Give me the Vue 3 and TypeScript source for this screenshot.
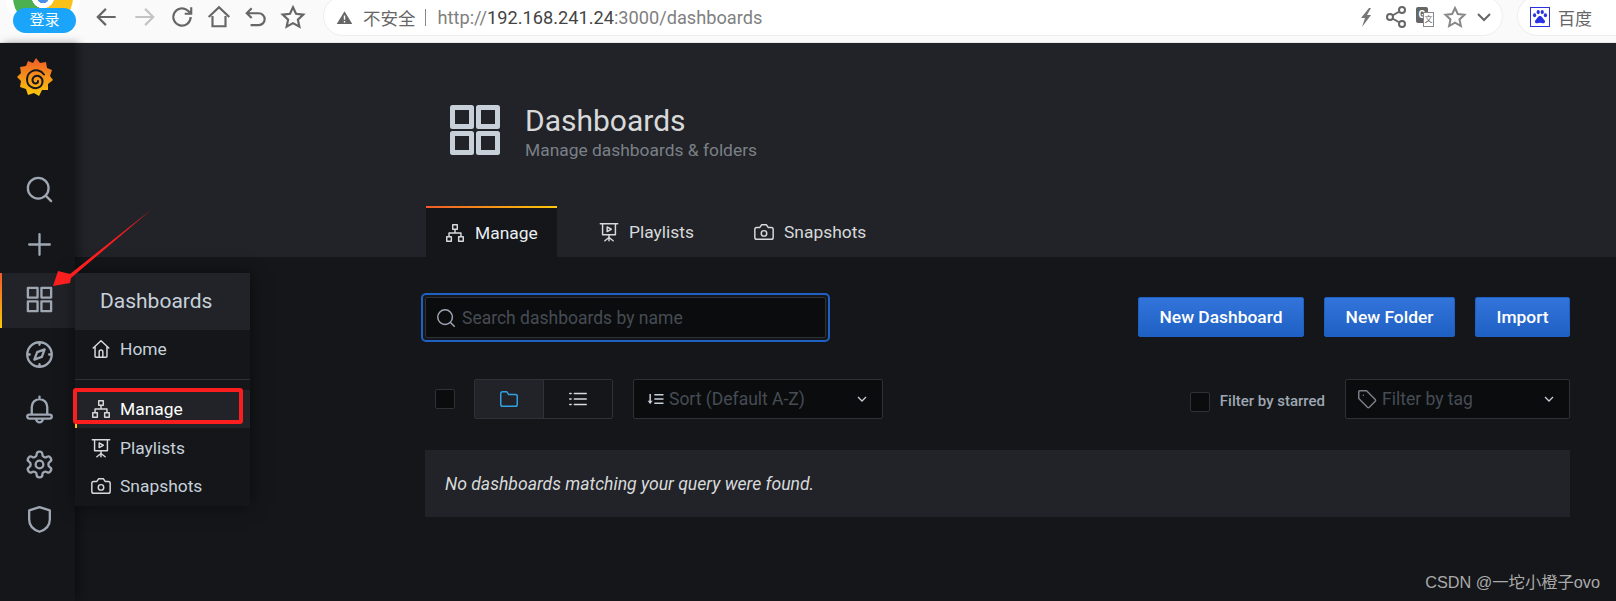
<script setup lang="ts">
const icons: Record<string, string> = {
  search: 'M19 11a8 8 0 1 1-16 0 8 8 0 0 1 16 0ZM21 21l-4.400-4.400',
  plus: 'M12 4v16M4 12h16',
  apps: 'M3 3h7.500v7.500H3zM13.500 3H21v7.500h-7.500zM3 13.500h7.500V21H3zM13.500 13.500H21V21h-7.500z',
  compass: 'M21.500 12a9.500 9.500 0 1 1-19 0 9.500 9.500 0 0 1 19 0ZM16 8l-2.200 5.800L8 16l2.200-5.800ZM12 2.500v2M12 19.500v2M2.500 12h2M19.500 12h2',
  bell: 'M6 15.500V10a6 6 0 0 1 12 0v5.500M12 4V2M4 16h16a1 1 0 0 1 0 3H4a1 1 0 0 1 0-3ZM9.500 19.500a2.500 2.500 0 0 0 5 0',
  gear: 'M12.220 2h-.44a2 2 0 0 0-2 2v.18a2 2 0 0 1-1 1.730l-.43.25a2 2 0 0 1-2 0l-.15-.08a2 2 0 0 0-2.730.73l-.22.38a2 2 0 0 0 .73 2.730l.15.1a2 2 0 0 1 1 1.720v.51a2 2 0 0 1-1 1.740l-.15.09a2 2 0 0 0-.73 2.730l.22.38a2 2 0 0 0 2.730.73l.15-.08a2 2 0 0 1 2 0l.43.25a2 2 0 0 1 1 1.730V20a2 2 0 0 0 2 2h.44a2 2 0 0 0 2-2v-.18a2 2 0 0 1 1-1.730l.43-.25a2 2 0 0 1 2 0l.15.08a2 2 0 0 0 2.730-.73l.22-.39a2 2 0 0 0-.73-2.730l-.15-.08a2 2 0 0 1-1-1.740v-.5a2 2 0 0 1 1-1.740l.15-.09a2 2 0 0 0 .73-2.730l-.22-.38a2 2 0 0 0-2.730-.73l-.15.08a2 2 0 0 1-2 0l-.43-.25a2 2 0 0 1-1-1.730V4a2 2 0 0 0-2-2ZM15 12a3 3 0 1 1-6 0 3 3 0 0 1 6 0Z',
  shield: 'M12 2.500 20 5v7c0 5-3.500 8-8 9.500-4.500-1.500-8-4.500-8-9.500V5Z',
  home: 'M3.500 11 12 3l8.500 8M5.500 9.500V20a1 1 0 0 0 1 1h11a1 1 0 0 0 1-1V9.500M10 21v-6a2 2 0 0 1 4 0v6',
  sitemap: 'M9.500 3h5v5h-5zM3 16h5v5H3zM16 16h5v5h-5zM12 8v4M5.500 16v-4h13v4',
  present: 'M2.500 3h19M5 3v12h14V3M12 15v3M7.500 21.500 12 18l4.500 3.500M12 18v3.500M10 6.500l4.500 2.500-4.500 2.500Z',
  camera: 'M4 7h3.500l2-3h5l2 3H20a2 2 0 0 1 2 2v9a2 2 0 0 1-2 2H4a2 2 0 0 1-2-2V9a2 2 0 0 1 2-2ZM15 13.500a3 3 0 1 1-6 0 3 3 0 0 1 6 0Z',
  folder: 'M3 6a2 2 0 0 1 2-2h4.500l2 3H19a2 2 0 0 1 2 2v9a2 2 0 0 1-2 2H5a2 2 0 0 1-2-2Z',
  list: 'M8 6h13M8 12h13M8 18h13M3 6h1.500M3 12h1.500M3 18h1.500',
  chevron: 'M6 9l6 6 6-6',
  tag: 'M3 4a1 1 0 0 1 1-1h7.500L21 12.500a1.500 1.500 0 0 1 0 2L14.500 21a1.500 1.500 0 0 1-2 0L3 11.500ZM8 8h.01',
  sort: 'M10 7h11M10 12h11M10 17h11M5 6v11',
  back: 'M20 12H4M11 4.500 3.500 12l7.500 7.500',
  forward: 'M4 12h16M13 4.500l7.500 7.500-7.500 7.500',
  reload: 'M20 12a8 8 0 1 1-2.500-5.800L20 8.500M20.500 3v6h-6',
  browserHome: 'M2.500 12 12 3l9.500 9M6 11v9.500h12V11',
  undo: 'M8 4 3.500 8.500 8 13M4 8.500h10.500a5.500 5.500 0 0 1 0 11H7',
  star: 'M12 3l2.800 6 6.700.8-5 4.600 1.400 6.600-5.900-3.300L6.100 21l1.400-6.600-5-4.600 6.700-.8Z',
  share: 'M8.500 10.500l7-4M8.500 13.500l7 4M9 12a3 3 0 1 1-6 0 3 3 0 0 1 6 0ZM21 5a3 3 0 1 1-6 0 3 3 0 0 1 6 0ZM21 19a3 3 0 1 1-6 0 3 3 0 0 1 6 0Z',
}

const navItems = ['search', 'plus', 'apps', 'compass', 'bell', 'gear', 'shield']
const tabs = [
  { icon: 'sitemap', label: 'Manage', active: true },
  { icon: 'present', label: 'Playlists', active: false },
  { icon: 'camera', label: 'Snapshots', active: false },
]
const menuLower = [
  { icon: 'sitemap', label: 'Manage', active: true },
  { icon: 'present', label: 'Playlists', active: false },
  { icon: 'camera', label: 'Snapshots', active: false },
]
const leftTools = [
  { icon: 'back', cls: '' },
  { icon: 'forward', cls: 'faint' },
  { icon: 'reload', cls: '' },
  { icon: 'browserHome', cls: '' },
  { icon: 'undo', cls: '' },
  { icon: 'star', cls: '' },
]
</script>

<template>
  <div class="root">
    <header class="browser">
      <div class="login-wrap">
        <div class="chrome-logo"></div>
        <span class="login">登录</span>
      </div>
      <div class="tools">
        <svg v-for="t in leftTools" :key="t.icon" class="tool" :class="t.cls" viewBox="0 0 24 24"><path :d="icons[t.icon]" /></svg>
      </div>
      <div class="address">
        <svg class="warn" viewBox="0 0 24 24"><path d="M12 3 23 21H1Z" fill="#666" /><path d="M12 9v6M12 17v2" stroke="#fff" stroke-width="2" /></svg>
        <span class="insecure">不安全</span>
        <span class="sep"></span>
        <span class="url">http://<span class="host">192.168.241.24</span>:3000/dashboards</span>
        <span class="addr-tools">
          <svg class="at" viewBox="0 0 24 24"><path d="M15 3 7 13h4l-3 9 9-12h-4l4-7Z" fill="#777" /></svg>
          <svg class="at stroke" viewBox="0 0 24 24"><path :d="icons.share" /></svg>
          <span class="translate"><span class="tg">G</span><span class="tx">文</span></span>
          <svg class="at stroke light" viewBox="0 0 24 24"><path :d="icons.star" /></svg>
          <svg class="at stroke" viewBox="0 0 24 24"><path :d="icons.chevron" /></svg>
        </span>
      </div>
      <div class="baidu">
        <span class="paw">
          <svg viewBox="0 0 20 20"><g fill="#2932e1"><ellipse cx="4" cy="8" rx="1.800" ry="2.300" /><ellipse cx="8" cy="4.500" rx="1.800" ry="2.400" /><ellipse cx="12.500" cy="4.500" rx="1.800" ry="2.400" /><ellipse cx="16" cy="8" rx="1.800" ry="2.300" /><path d="M10 9c-2.500 0-3 3-5 4.500-1.500 1.500 0 4 2 3.500 1-.2 2-.5 3-.5s2 .3 3 .5c2 .5 3.500-2 2-3.500C13 12 12.500 9 10 9Z" /></g></svg>
        </span>
        <span class="baidu-text">百度</span>
      </div>
    </header>

    <div class="app">
      <aside class="sidebar">
        <div class="logo">
          <svg viewBox="0 0 36 40" width="36" height="40">
            <defs>
              <linearGradient id="gf" x1="0" y1="0" x2="0" y2="1">
                <stop offset="0" stop-color="#f05a28" />
                <stop offset="1" stop-color="#fbca0a" />
              </linearGradient>
            </defs>
            <path d="M19 0l4 5 6-1 1 6 5 2-2 6 3 4-5 4 0 6-6 0-3 6-5-3-6 2-2-6-6-2 1-6-4-4 4-4-1-6 6-1 2-5 5 2Z" fill="url(#gf)" />
            <path d="M27 16.500C24 12.500 19 11 14.500 13.500 9 16.500 8.500 25 13.500 28.500 18.500 32 25 29.500 25.500 24 26 19.500 21.500 16.500 17.500 18.500 14.500 20.500 15 25 18.500 25.500 20 25.500 21.500 24.500 21 23" fill="none" stroke="#17181c" stroke-width="2" stroke-linecap="round" />
          </svg>
        </div>
        <nav class="nav">
          <div v-for="n in navItems" :key="n" class="nav-item" :class="{ active: n === 'apps' }">
            <svg class="nav-icon" viewBox="0 0 24 24"><path :d="icons[n]" /></svg>
          </div>
        </nav>
      </aside>

      <main class="main">
        <section class="band">
          <div class="band-inner">
            <div class="title-row">
              <svg class="title-icon" viewBox="0 0 50 50"><path d="M2.500 2.500h19v19h-19zM28.500 2.500h19v19h-19zM2.500 28.500h19v19h-19zM28.500 28.500h19v19h-19z" /></svg>
              <div>
                <h1 class="title">Dashboards</h1>
                <div class="subtitle">Manage dashboards &amp; folders</div>
              </div>
            </div>
            <div class="tabs">
              <div v-for="t in tabs" :key="t.label" class="tab" :class="{ on: t.active }">
                <svg class="small-icon" viewBox="0 0 24 24"><path :d="icons[t.icon]" /></svg>
                <span>{{ t.label }}</span>
              </div>
            </div>
          </div>
        </section>

        <section class="page">
          <div class="row-top">
            <div class="search-ring">
              <div class="search">
                <svg class="small-icon muted" viewBox="0 0 24 24"><path :d="icons.search" /></svg>
                <span class="ph">Search dashboards by name</span>
              </div>
            </div>
            <div class="actions">
              <button class="btn nd">New Dashboard</button>
              <button class="btn nf">New Folder</button>
              <button class="btn im">Import</button>
            </div>
          </div>

          <div class="row-filter">
            <span class="check"></span>
            <div class="toggle">
              <span class="seg on"><svg class="small-icon blue" viewBox="0 0 24 24"><path :d="icons.folder" /></svg></span>
              <span class="seg"><svg class="small-icon" viewBox="0 0 24 24"><path :d="icons.list" /></svg></span>
            </div>
            <div class="select sort">
              <svg class="sort-icon" viewBox="0 0 24 24"><path :d="icons.sort" /><path d="M2 14h6l-3 4Z" fill="#c7d0d9" stroke="none" /></svg>
              <span class="ph">Sort (Default A-Z)</span>
              <svg class="chev" viewBox="0 0 24 24"><path :d="icons.chevron" /></svg>
            </div>
            <div class="spacer"></div>
            <span class="check starred"></span>
            <span class="starred-label">Filter by starred</span>
            <div class="select tag">
              <svg class="small-icon muted" viewBox="0 0 24 24"><path :d="icons.tag" /></svg>
              <span class="ph">Filter by tag</span>
              <svg class="chev" viewBox="0 0 24 24"><path :d="icons.chevron" /></svg>
            </div>
          </div>

          <div class="alert">No dashboards matching your query were found.</div>
        </section>
      </main>

      <div class="flyout">
        <div class="fly-head">Dashboards</div>
        <div class="fly-item">
          <svg class="small-icon" viewBox="0 0 24 24"><path :d="icons.home" /></svg>
          <span>Home</span>
        </div>
        <div class="fly-div"></div>
        <div v-for="m in menuLower" :key="m.label" class="fly-item" :class="m.active ? 'sel' : 'low'">
          <svg class="small-icon" viewBox="0 0 24 24"><path :d="icons[m.icon]" /></svg>
          <span>{{ m.label }}</span>
        </div>
      </div>

      <div class="red-box"></div>
      <svg class="arrow" width="120" height="100" viewBox="0 0 120 100">
        <path d="M112 6 30 71 18 68 13 83 30 80 31 75Z" fill="#fb1e1e" />
      </svg>
      <div class="watermark">CSDN @一坨小橙子ovo</div>
    </div>
  </div>
</template>

<style>
html, body { margin: 0; background: #141619; overflow: hidden; }
</style>

<style scoped>
* { box-sizing: border-box; }
.root { width: 1616px; height: 601px; overflow: hidden; font-family: Roboto, "Noto Sans CJK SC", sans-serif; background: #141619; }

.browser { height: 43px; background: #fafafa; display: flex; align-items: flex-start; border-bottom: 1px solid #e8e8e8; overflow: hidden; }
.login-wrap { width: 94px; height: 42px; position: relative; flex: none; overflow: hidden; }
.chrome-logo { position: absolute; left: 13px; top: -33px; width: 60px; height: 60px; border-radius: 50%; box-shadow: 0 0 0 7px #fff; background: radial-gradient(circle at 50% 50%, #4a90e8 0 6px, #fff 6.500px 11px, transparent 11.500px), conic-gradient(from 90deg, #fbc116 0 100deg, #4caf50 100deg 360deg); }
.login { position: absolute; left: 13px; top: 8px; width: 63px; height: 25px; border-radius: 13px; background: #1aa5fb; color: #fff; font-size: 15px; line-height: 25px; text-align: center; }
.tools { display: flex; gap: 11.300px; width: 229px; margin-top: 4px; flex: none; align-items: center; }
.tool { width: 26px; height: 26px; fill: none; stroke: #666; stroke-width: 2; flex: none; }
.tool.faint { stroke: #c4c4c4; }
.address { width: 1180px; height: 40px; margin-top: -4px; padding: 2px 6px 0 12px; background: #fff; border: 1px solid #eee; border-radius: 20px; display: flex; align-items: center; color: #666; flex: none; }
.warn { width: 17px; height: 17px; flex: none; }
.insecure { margin-left: 10px; font-size: 17.500px; color: #666; }
.sep { width: 1px; height: 17px; background: #888; margin: 0 12px 0 9px; }
.url { font-size: 18.200px; color: #808080; }
.host { color: #444; }
.addr-tools { margin-left: auto; display: flex; align-items: center; gap: 5.500px; }
.at { width: 24px; height: 24px; flex: none; }
.at.stroke { fill: none; stroke: #666; stroke-width: 2; }
.at.light { stroke: #888; }
.translate { width: 24px; height: 24px; position: relative; display: block; flex: none; }
.tg { position: absolute; left: 3px; top: 2px; width: 12px; height: 16px; background: #666; color: #fff; font-size: 10px; font-weight: 700; text-align: center; line-height: 16px; border-radius: 2px; }
.tx { position: absolute; right: 3px; bottom: 2px; width: 11px; height: 15px; border: 1px solid #888; background: #fff; color: #666; font-size: 8px; line-height: 13px; text-align: center; }
.baidu { margin-left: 14px; margin-top: -4px; width: 110px; height: 40px; padding-top: 2px; border: 1px solid #eee; border-right: none; border-radius: 20px 0 0 20px; background: #fff; display: flex; align-items: center; padding-left: 12px; gap: 8px; flex: none; }
.paw { width: 20px; height: 20px; border: 1px solid #2932e1; display: block; flex: none; }
.paw svg { display: block; width: 18px; height: 18px; }
.baidu-text { font-size: 17px; color: #666; }

.app { position: relative; display: flex; height: 558px; background: #141619; }
.sidebar { width: 75px; flex: none; background: #141619; box-shadow: 4px 0 8px rgba(0, 0, 0, .35); position: relative; z-index: 2; }
.logo { height: 64px; padding: 15px 0 0 17px; }
.logo svg { display: block; }
.nav { padding-top: 56px; }
.nav-item { height: 55px; display: flex; align-items: center; justify-content: center; padding-left: 3px; position: relative; }
.nav-item.active { background: #212328; }
.nav-item.active::before { content: ""; position: absolute; left: 0; top: 0; bottom: 0; width: 2px; background: linear-gradient(180deg, #f05a28, #fbca0a); }
.nav-icon { width: 31px; height: 31px; margin-top: -2px; fill: none; stroke: #9fa7b3; stroke-width: 1.800; stroke-linecap: round; stroke-linejoin: round; }

.main { flex: 1; min-width: 0; }
.band { background: #212328; height: 214px; padding-left: 351px; }
.band-inner { height: 100%; display: flex; flex-direction: column; }
.title-row { display: flex; align-items: flex-start; padding: 62px 0 0 24px; height: 163px; gap: 25px; }
.title-icon { width: 50px; height: 50px; fill: none; stroke: #c7d0d9; stroke-width: 5; stroke-linejoin: round; flex: none; }
.title { margin: -1px 0 0; font-size: 30px; font-weight: 400; line-height: 34px; color: #d8d9da; }
.subtitle { margin-top: 2px; font-size: 17.400px; line-height: 20px; color: #7b8087; }
.tabs { display: flex; height: 51px; }
.tab { display: flex; align-items: center; gap: 11px; font-size: 17.400px; color: #d8d9da; padding: 0 20px; width: 131px; }
.tab:nth-child(2) { width: 178px; padding-left: 43px; }
.tab:nth-child(3) { width: auto; padding-left: 20px; }
.tab.on { background: #141619; position: relative; padding-top: 2px; color: #e9edf2; }
.tab.on::before { content: ""; position: absolute; left: 0; right: 0; top: 0; height: 2px; background: linear-gradient(90deg, #f05a28, #fbca0a); }
.small-icon { width: 22px; height: 22px; margin: -2px; fill: none; stroke: #d8d9da; stroke-width: 1.600; stroke-linejoin: round; stroke-linecap: round; flex: none; }
.small-icon.blue { stroke: #33a2e5; }
.small-icon.muted { stroke: #9fa7b3; }

.page { padding: 36px 46px 0 350px; }
.row-top { display: flex; align-items: center; justify-content: space-between; height: 49px; margin-left: -4px; }
.search-ring { width: 409px; height: 49px; border: 2px solid #1f60c4; border-radius: 5px; padding: 2px; }
.search { height: 100%; background: #0b0c0e; border: 1px solid #2c3235; border-radius: 2px; display: flex; align-items: center; padding: 0 10px 0 11px; gap: 7px; }
.ph { font-size: 17.500px; color: #464c54; }
.actions { display: flex; gap: 20px; margin-top: -1px; }
.btn { height: 40px; border: 1px solid #1f60c4; border-radius: 2px; background: linear-gradient(180deg, #3274d9, #1f60c4); color: #fff; font: 500 17.400px Roboto, sans-serif; padding: 0; }
.nd { width: 166px; }
.nf { width: 131px; }
.im { width: 95px; }
.row-filter { display: flex; align-items: center; height: 40px; margin-top: 37px; padding-left: 10px; }
.check { width: 20px; height: 20px; background: #0b0c0e; border: 1px solid #2c3235; border-radius: 2px; flex: none; }
.toggle { display: flex; width: 139px; height: 40px; margin-left: 19px; border: 1px solid #2c3235; border-radius: 2px; flex: none; }
.seg { flex: 1; display: flex; align-items: center; justify-content: center; }
.seg.on { background: #212328; border-right: 1px solid #2c3235; }
.select { height: 40px; background: #0b0c0e; border: 1px solid #2c3235; border-radius: 2px; display: flex; align-items: center; flex: none; }
.sort { width: 250px; margin-left: 20px; padding: 0 12px; gap: 3px; }
.sort-icon { width: 20px; height: 20px; fill: none; stroke: #c7d0d9; stroke-width: 1.800; flex: none; }
.tag { width: 225px; padding: 0 12px; gap: 6px; margin-left: 20px; }
.tag .small-icon { stroke: #7b8087; }
.chev { width: 16px; height: 16px; margin-left: auto; fill: none; stroke: #c7d0d9; stroke-width: 1.900; flex: none; }
.spacer { flex: 1; }
.starred { margin-top: 6px; }
.starred-label { margin-left: 10px; margin-top: 4px; font-size: 15px; font-weight: 500; color: #9fa7b3; }
.alert { margin-top: 31px; height: 67px; background: #212328; display: flex; align-items: center; padding-left: 20px; font-style: italic; font-size: 17.600px; color: #d8d9da; }

.flyout { position: absolute; left: 75px; top: 230px; width: 175px; height: 233px; background: #141619; box-shadow: 0 0 16px rgba(0, 0, 0, .5); z-index: 3; }
.fly-head { height: 57px; background: #212328; font-size: 21px; line-height: 57px; padding-left: 25px; color: #c7d0d9; }
.fly-item { display: flex; align-items: center; gap: 10px; padding-left: 17px; height: 38px; font-size: 17.400px; color: #c7d0d9; }
.fly-item.low { padding-top: 2px; }
.fly-div { height: 1px; background: #2c3235; margin: 11px 0 10px; }
.fly-item.sel { color: #fff; background: #212328; position: relative; }
.fly-item.sel::before { content: ""; position: absolute; left: 0; top: 0; bottom: 0; width: 2px; background: linear-gradient(180deg, #f05a28, #fbca0a); }

.red-box { position: absolute; left: 73px; top: 345px; width: 170px; height: 36px; border: 4px solid #fb1e1e; border-radius: 3px; z-index: 4; }
.arrow { position: absolute; left: 40px; top: 160px; z-index: 5; }
.watermark { position: absolute; right: 16px; top: 526px; font-size: 16.300px; color: #aaa; font-family: "Liberation Sans", "Noto Sans CJK SC", sans-serif; z-index: 6; }
</style>
